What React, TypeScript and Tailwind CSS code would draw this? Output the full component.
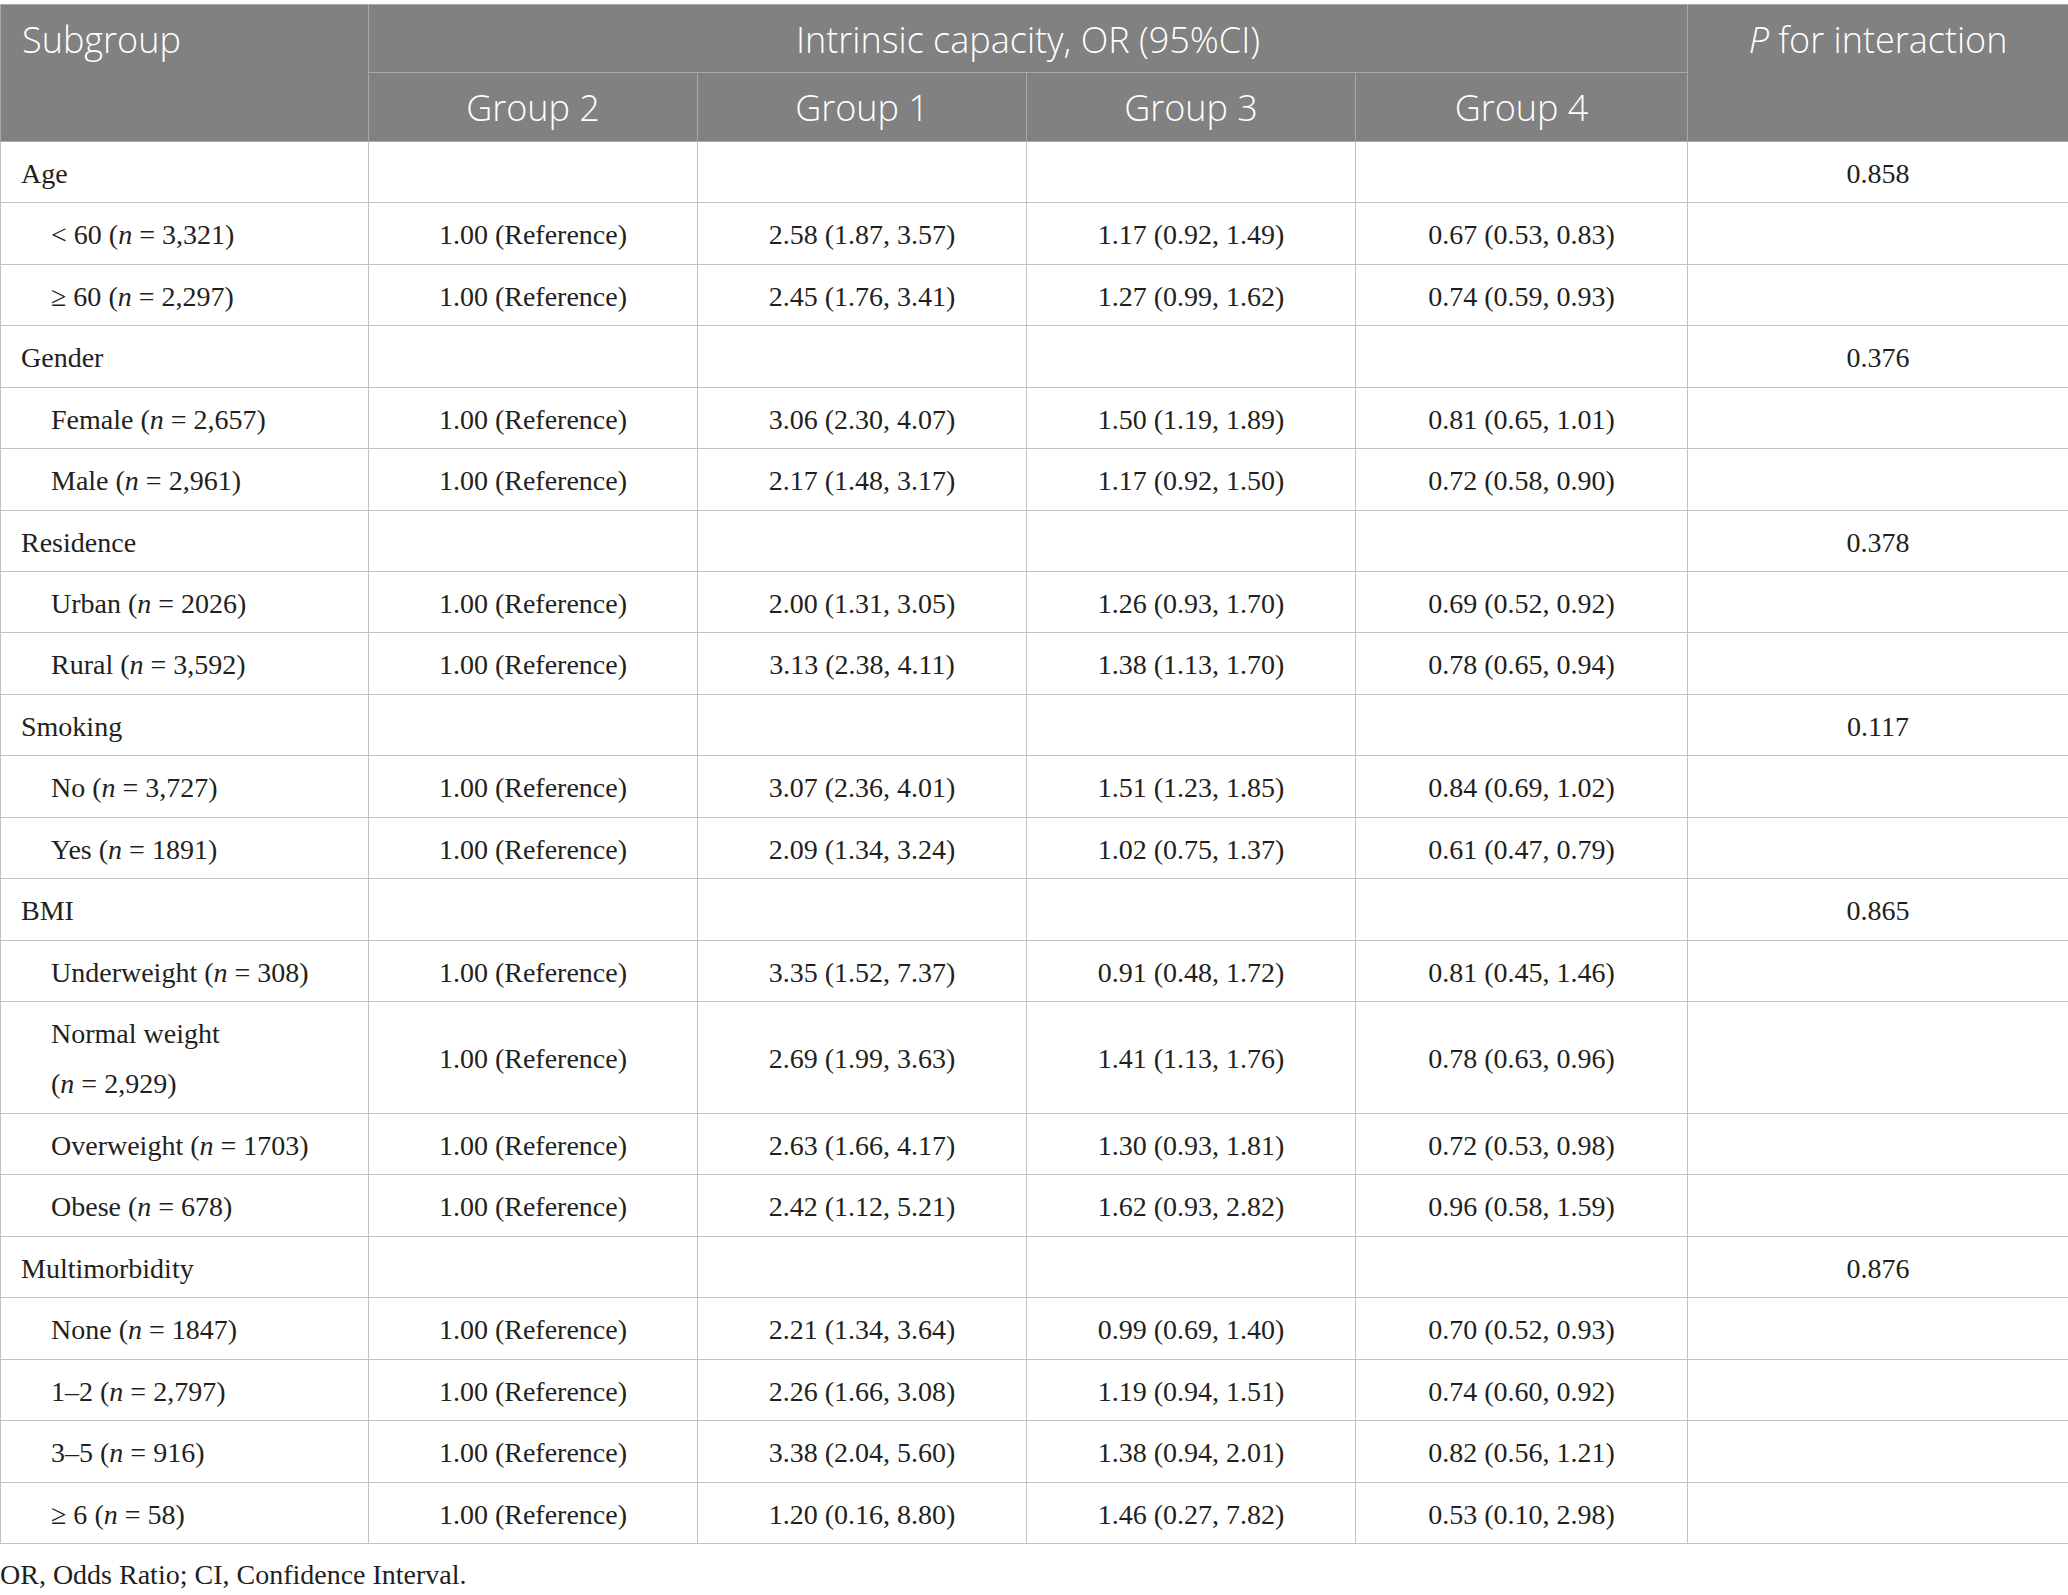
const groups = [
  {
    name: "Age",
    p: "0.858",
    rows: [
      { label: "< 60", n: "3,321", g1: "2.58 (1.87, 3.57)", g3: "1.17 (0.92, 1.49)", g4: "0.67 (0.53, 0.83)" },
      { label: "≥ 60", n: "2,297", g1: "2.45 (1.76, 3.41)", g3: "1.27 (0.99, 1.62)", g4: "0.74 (0.59, 0.93)" },
    ],
  },
  {
    name: "Gender",
    p: "0.376",
    rows: [
      { label: "Female", n: "2,657", g1: "3.06 (2.30, 4.07)", g3: "1.50 (1.19, 1.89)", g4: "0.81 (0.65, 1.01)" },
      { label: "Male", n: "2,961", g1: "2.17 (1.48, 3.17)", g3: "1.17 (0.92, 1.50)", g4: "0.72 (0.58, 0.90)" },
    ],
  },
  {
    name: "Residence",
    p: "0.378",
    rows: [
      { label: "Urban", n: "2026", g1: "2.00 (1.31, 3.05)", g3: "1.26 (0.93, 1.70)", g4: "0.69 (0.52, 0.92)" },
      { label: "Rural", n: "3,592", g1: "3.13 (2.38, 4.11)", g3: "1.38 (1.13, 1.70)", g4: "0.78 (0.65, 0.94)" },
    ],
  },
  {
    name: "Smoking",
    p: "0.117",
    rows: [
      { label: "No", n: "3,727", g1: "3.07 (2.36, 4.01)", g3: "1.51 (1.23, 1.85)", g4: "0.84 (0.69, 1.02)" },
      { label: "Yes", n: "1891", g1: "2.09 (1.34, 3.24)", g3: "1.02 (0.75, 1.37)", g4: "0.61 (0.47, 0.79)" },
    ],
  },
  {
    name: "BMI",
    p: "0.865",
    rows: [
      { label: "Underweight", n: "308", g1: "3.35 (1.52, 7.37)", g3: "0.91 (0.48, 1.72)", g4: "0.81 (0.45, 1.46)" },
      { label: "Normal weight", n: "2,929", g1: "2.69 (1.99, 3.63)", g3: "1.41 (1.13, 1.76)", g4: "0.78 (0.63, 0.96)", wrap: true },
      { label: "Overweight", n: "1703", g1: "2.63 (1.66, 4.17)", g3: "1.30 (0.93, 1.81)", g4: "0.72 (0.53, 0.98)" },
      { label: "Obese", n: "678", g1: "2.42 (1.12, 5.21)", g3: "1.62 (0.93, 2.82)", g4: "0.96 (0.58, 1.59)" },
    ],
  },
  {
    name: "Multimorbidity",
    p: "0.876",
    rows: [
      { label: "None", n: "1847", g1: "2.21 (1.34, 3.64)", g3: "0.99 (0.69, 1.40)", g4: "0.70 (0.52, 0.93)" },
      { label: "1–2", n: "2,797", g1: "2.26 (1.66, 3.08)", g3: "1.19 (0.94, 1.51)", g4: "0.74 (0.60, 0.92)" },
      { label: "3–5", n: "916", g1: "3.38 (2.04, 5.60)", g3: "1.38 (0.94, 2.01)", g4: "0.82 (0.56, 1.21)" },
      { label: "≥ 6", n: "58", g1: "1.20 (0.16, 8.80)", g3: "1.46 (0.27, 7.82)", g4: "0.53 (0.10, 2.98)" },
    ],
  },
];

// flatten to rows so each one can get a 61 or 62px pitch (average ~61.4px like the source)
type Row = { kind: "head"; name: string; p: string } | { kind: "item"; r: (typeof groups)[number]["rows"][number] & { wrap?: boolean } };
const flat: Row[] = [];
groups.forEach((g) => {
  flat.push({ kind: "head", name: g.name, p: g.p });
  g.rows.forEach((r) => flat.push({ kind: "item", r }));
});

const pitch = 61.43;
let cum = 0;
const tall = flat.map((row) => {
  if (row.kind === "item" && row.r.wrap) return true;
  const before = Math.round(cum);
  cum += pitch;
  return Math.round(cum) - before > 61;
});

const base = "border border-[#c2c2c2] pt-[7px] leading-[50px] text-center align-middle";
const cell = (t: boolean) => `${base} ${t ? "pb-[4px]" : "pb-[3px]"}`;

export default function App() {
  return (
    <div className="w-[2068px] bg-white pt-[4px] text-[28px] text-[#231f20] [font-family:'Liberation_Serif','Times_New_Roman',serif]">
      <table className="w-[2068px] table-fixed border-collapse">
        <colgroup>
          <col className="w-[368px]" />
          <col className="w-[329px]" />
          <col className="w-[329px]" />
          <col className="w-[329px]" />
          <col className="w-[332px]" />
          <col className="w-[381px]" />
        </colgroup>
        <thead className="bg-[#808180] text-[36px] font-light text-white [font-family:'Open_Sans',sans-serif]">
          <tr>
            <th rowSpan={2} className="border border-[#a9a9a9] p-0 text-left align-top font-light">
              <div className="flex h-[68px] items-center pl-[21px] pt-[2px]">Subgroup</div>
            </th>
            <th colSpan={4} className="h-[68px] border border-[#a9a9a9] p-0 pt-[2px] text-center font-light">
              Intrinsic capacity, OR (95%CI)
            </th>
            <th rowSpan={2} className="border border-[#a9a9a9] p-0 align-top font-light">
              <div className="flex h-[68px] items-center justify-center pt-[2px]">
                <span className="italic">P</span>&nbsp;for interaction
              </div>
            </th>
          </tr>
          <tr>
            {["Group 2", "Group 1", "Group 3", "Group 4"].map((g) => (
              <th key={g} className="h-[69px] border border-[#a9a9a9] p-0 pt-[1px] text-center font-light">
                {g}
              </th>
            ))}
          </tr>
        </thead>
        <tbody>
          {flat.map((row, i) => {
            const td = cell(tall[i]);
            if (row.kind === "head") {
              return (
                <tr key={row.name}>
                  <td className={`${td} !text-left pl-[20px]`}>{row.name}</td>
                  <td className={td}></td>
                  <td className={td}></td>
                  <td className={td}></td>
                  <td className={td}></td>
                  <td className={td}>{row.p}</td>
                </tr>
              );
            }
            const r = row.r;
            return (
              <tr key={i}>
                <td className={`${td} !text-left pl-[50px] pr-[10px]`}>
                  {r.wrap ? (
                    <>
                      {r.label}
                      <br />(<i>n</i> = {r.n})
                    </>
                  ) : (
                    <>
                      {r.label} (<i>n</i> = {r.n})
                    </>
                  )}
                </td>
                <td className={td}>1.00 (Reference)</td>
                <td className={td}>{r.g1}</td>
                <td className={td}>{r.g3}</td>
                <td className={td}>{r.g4}</td>
                <td className={td}></td>
              </tr>
            );
          })}
        </tbody>
      </table>
      <p className="mt-[6px] leading-[50px]">OR, Odds Ratio; CI, Confidence Interval.</p>
    </div>
  );
}
